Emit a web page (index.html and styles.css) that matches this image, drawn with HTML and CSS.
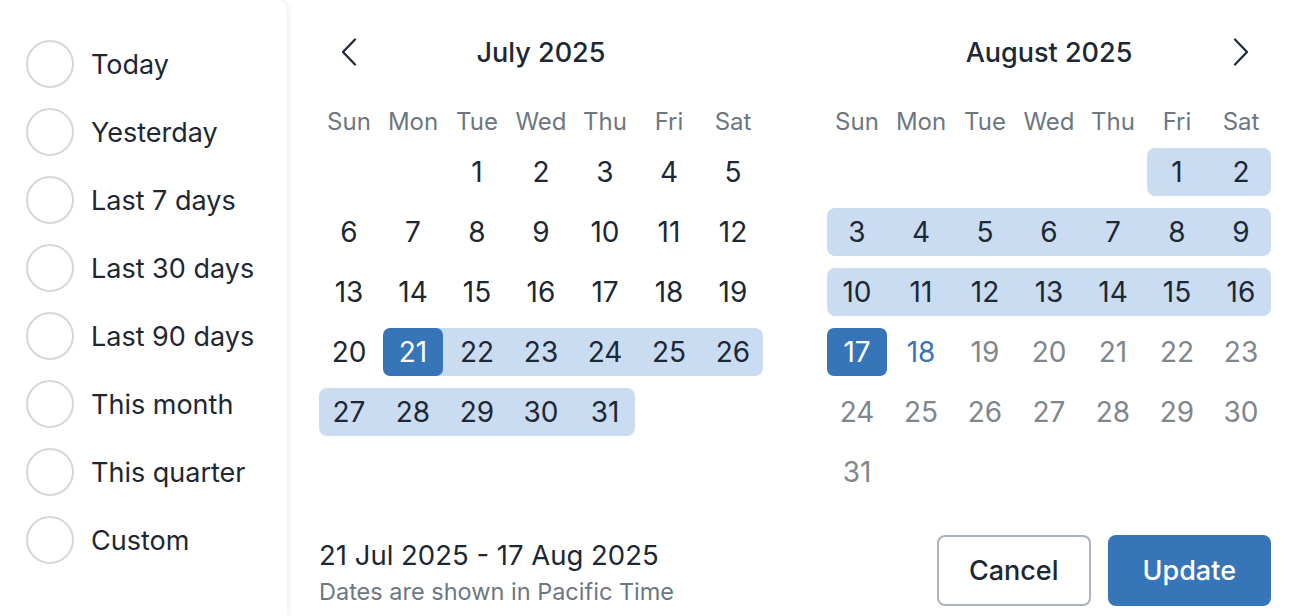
FILE: index.html
```html
<!DOCTYPE html>
<html lang="en">
<head>
    <meta charset="UTF-8">
    <meta name="viewport" content="width=device-width, initial-scale=1.0">
    <title>Date range</title>
    <link rel="stylesheet" href="styles.css">
</head>
<body>
    <div class="picker">
        <!-- Presets -->
        <aside class="presets">
            <label class="preset"><span class="radio"></span>Today</label>
            <label class="preset"><span class="radio"></span>Yesterday</label>
            <label class="preset"><span class="radio"></span>Last 7 days</label>
            <label class="preset"><span class="radio"></span>Last 30 days</label>
            <label class="preset"><span class="radio"></span>Last 90 days</label>
            <label class="preset"><span class="radio"></span>This month</label>
            <label class="preset"><span class="radio"></span>This quarter</label>
            <label class="preset"><span class="radio"></span>Custom</label>
        </aside>

        <section class="main">
            <div class="months">
                <!-- July -->
                <div class="month">
                    <div class="month-head">
                        <button class="nav" type="button" aria-label="Previous month">
                            <svg width="16" height="28" viewBox="0 0 16 28"><polyline points="14,1.5 2,14 14,26.5" fill="none" stroke="#1d2833" stroke-width="2.2" stroke-linecap="round" stroke-linejoin="round"/></svg>
                        </button>
                        <span class="title">July 2025</span>
                        <span></span>
                    </div>
                    <div class="weekdays">
                        <span>Sun</span><span>Mon</span><span>Tue</span><span>Wed</span><span>Thu</span><span>Fri</span><span>Sat</span>
                    </div>
                    <div class="days">
                        <span></span><span></span>
                        <span class="day">1</span><span class="day">2</span><span class="day">3</span><span class="day">4</span><span class="day">5</span>
                        <span class="day">6</span><span class="day">7</span><span class="day">8</span><span class="day">9</span><span class="day">10</span><span class="day">11</span><span class="day">12</span>
                        <span class="day">13</span><span class="day">14</span><span class="day">15</span><span class="day">16</span><span class="day">17</span><span class="day">18</span><span class="day">19</span>
                        <span class="day">20</span>
                        <span class="day in start sel">21</span>
                        <span class="day in">22</span><span class="day in">23</span><span class="day in">24</span><span class="day in">25</span>
                        <span class="day in last">26</span>
                        <span class="day in first">27</span>
                        <span class="day in">28</span><span class="day in">29</span><span class="day in">30</span>
                        <span class="day in last">31</span>
                    </div>
                </div>

                <!-- August -->
                <div class="month">
                    <div class="month-head">
                        <span></span>
                        <span class="title">August 2025</span>
                        <button class="nav" type="button" aria-label="Next month">
                            <svg width="16" height="28" viewBox="0 0 16 28"><polyline points="2,1.5 14,14 2,26.5" fill="none" stroke="#1d2833" stroke-width="2.2" stroke-linecap="round" stroke-linejoin="round"/></svg>
                        </button>
                    </div>
                    <div class="weekdays">
                        <span>Sun</span><span>Mon</span><span>Tue</span><span>Wed</span><span>Thu</span><span>Fri</span><span>Sat</span>
                    </div>
                    <div class="days">
                        <span></span><span></span><span></span><span></span><span></span>
                        <span class="day in first">1</span>
                        <span class="day in last">2</span>
                        <span class="day in first">3</span>
                        <span class="day in">4</span><span class="day in">5</span><span class="day in">6</span><span class="day in">7</span><span class="day in">8</span>
                        <span class="day in last">9</span>
                        <span class="day in first">10</span>
                        <span class="day in">11</span><span class="day in">12</span><span class="day in">13</span><span class="day in">14</span><span class="day in">15</span>
                        <span class="day in last">16</span>
                        <span class="day sel">17</span>
                        <span class="day today">18</span>
                        <span class="day muted">19</span><span class="day muted">20</span><span class="day muted">21</span><span class="day muted">22</span><span class="day muted">23</span>
                        <span class="day muted">24</span><span class="day muted">25</span><span class="day muted">26</span><span class="day muted">27</span><span class="day muted">28</span><span class="day muted">29</span><span class="day muted">30</span>
                        <span class="day muted">31</span>
                    </div>
                </div>
            </div>

            <div class="footer">
                <div class="range">
                    <div class="range-text">21 Jul 2025 - 17 Aug 2025</div>
                    <div class="range-note">Dates are shown in Pacific Time</div>
                </div>
                <div class="actions">
                    <button class="btn btn-cancel" type="button">Cancel</button>
                    <button class="btn btn-update" type="button">Update</button>
                </div>
            </div>
        </section>
    </div>
</body>
</html>
```

FILE: styles.css
```css
body {
    margin: 0;
    font-family: Inter, "Noto Sans", sans-serif;
    color: #1d2833;
    background: #fff;
    overflow: hidden;
}

.picker {
    display: flex;
    height: 616px;
}

/* Presets */
.presets {
    width: 287px;
    flex-shrink: 0;
    box-sizing: border-box;
    padding: 30px 0 0 26px;
    background: #fff;
    border-radius: 0 10px 0 0;
    box-shadow: 2px 0 6px rgba(0, 0, 0, 0.07);
}

.preset {
    display: flex;
    align-items: center;
    gap: 17px;
    height: 68px;
    font-size: 27px;
    cursor: pointer;
}

.radio {
    width: 48px;
    height: 48px;
    box-sizing: border-box;
    border: 2px solid #d3d8dd;
    border-radius: 50%;
}

/* Calendars */
.main {
    flex: 1;
    padding: 24px 17px 0 30px;
}

.months {
    display: flex;
    justify-content: space-between;
}

.month {
    width: 448px;
}

.month-head {
    display: grid;
    grid-template-columns: 64px 1fr 64px;
    align-items: center;
    height: 56px;
}

.title {
    text-align: center;
    font-size: 27px;
    font-weight: 450;
}

.nav {
    display: flex;
    align-items: center;
    justify-content: center;
    background: none;
    border: none;
    padding: 0;
    cursor: pointer;
}

.weekdays {
    display: grid;
    grid-template-columns: repeat(7, 64px);
    margin-top: 20px;
    height: 42px;
    align-items: center;
    text-align: center;
    font-size: 24px;
    color: #6d7781;
}

.days {
    display: grid;
    grid-template-columns: repeat(7, 64px);
    grid-auto-rows: 60px;
}

.day {
    position: relative;
    z-index: 0;
    display: flex;
    align-items: center;
    justify-content: center;
    font-size: 28px;
}

.day.in::before {
    content: "";
    position: absolute;
    z-index: -1;
    top: 6px;
    bottom: 6px;
    left: 0;
    right: 0;
    background: #c9dcf2;
}

.day.first::before {
    left: 2px;
    border-radius: 8px 0 0 8px;
}

.day.last::before {
    right: 2px;
    border-radius: 0 8px 8px 0;
}

.day.start::before {
    left: 50%;
}

.day.sel {
    color: #fff;
}

.day.sel::after {
    content: "";
    position: absolute;
    z-index: -1;
    top: 6px;
    bottom: 6px;
    left: 2px;
    right: 2px;
    border-radius: 7px;
    background: #3675b8;
}

.day.today {
    color: #3675b8;
}

.day.muted {
    color: #7f868c;
}

/* Footer */
.footer {
    display: flex;
    justify-content: space-between;
    align-items: flex-start;
    margin-top: 33px;
}

.range {
    padding: 3px 0 0 2px;
}

.range-text {
    font-size: 27.5px;
    line-height: 34px;
}

.range-note {
    font-size: 23.5px;
    line-height: 40px;
    color: #6d7781;
}

.actions {
    display: flex;
    gap: 17px;
    margin-right: 2px;
}

.btn {
    height: 71px;
    padding: 0 30px;
    border-radius: 8px;
    font-family: Inter, "Noto Sans", sans-serif;
    font-size: 27px;
    font-weight: 450;
    cursor: pointer;
}

.btn-cancel {
    background: #fff;
    color: #1d2833;
    border: 2px solid #aab4be;
}

.btn-update {
    background: #3675b8;
    color: #fff;
    border: none;
    padding: 0 35px;
}
```
